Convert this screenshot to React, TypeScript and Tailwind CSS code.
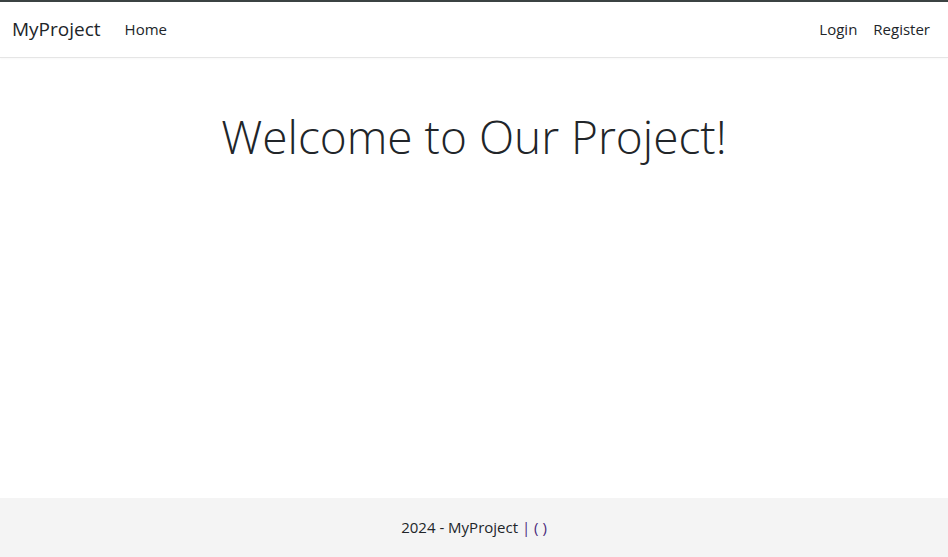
export default function App() {
  return (
    <div className="flex h-[557px] flex-col bg-white text-[#212529] [font-family:'Open_Sans','Noto_Sans',sans-serif]">
      <header className="border-t-2 border-b border-t-[#3b4343] border-b-[#e5e5e5] shadow-[0_1px_2px_rgba(0,0,0,0.03)]">
        <nav className="flex h-[55px] items-center pl-3 pr-[18px]">
          <a className="mr-6 text-[19px] text-[#212529]">MyProject</a>
          <a className="text-[15px] text-[#212529]">Home</a>
          <div className="ml-auto flex gap-[16px] text-[15px]">
            <a>Login</a>
            <a>Register</a>
          </div>
        </nav>
      </header>
      <main className="flex-1">
        <h1 className="mt-[50px] text-center text-[46px] font-light leading-tight text-[#212529]">
          Welcome to Our Project!
        </h1>
      </main>
      <footer className="h-[59px] bg-[#f4f4f4] text-center text-[15px] leading-[59px] text-[#212529]">
        2024 - MyProject <span className="text-[#4a2a7a]">| ( )</span>
      </footer>
    </div>
  );
}
